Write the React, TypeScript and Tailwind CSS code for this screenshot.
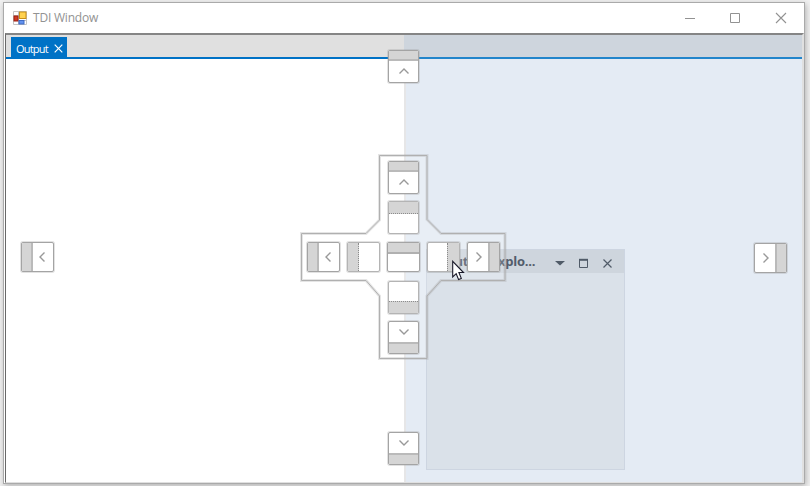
import React from 'react';

type Dir = 'up' | 'down' | 'left' | 'right';

const ARROWS: Record<Dir, string> = {
  up: 'M1.5 7.5 L6 3 L10.5 7.5',
  down: 'M1.5 3.5 L6 8 L10.5 3.5',
  left: 'M7.5 1.5 L3 6 L7.5 10.5',
  right: 'M4.5 1.5 L9 6 L4.5 10.5',
};

const FLOW: Record<Dir, string> = {
  up: 'flex-col h-[33px] w-[31px]',
  down: 'flex-col-reverse h-[33px] w-[31px]',
  left: 'flex-row h-[30px] w-[33px]',
  right: 'flex-row-reverse h-[30px] w-[33px]',
};

const STRIP: Record<Dir, string> = {
  up: 'h-[10px] border-b-2',
  down: 'h-[11px] border-t-2',
  left: 'w-[11px] border-r-2',
  right: 'w-[11px] border-l-2',
};

const DOTTED: Record<Dir, string> = {
  up: 'h-[12px] border-b',
  down: 'h-[12px] border-t',
  left: 'w-[11px] border-r',
  right: 'w-[12px] border-l',
};

function Guide({ dir, at, arrow = true, dotted = false }: { dir: Dir; at: string; arrow?: boolean; dotted?: boolean }) {
  return (
    <div
      className={`absolute flex overflow-hidden rounded-[2px] border bg-white ${dotted ? 'border-[#b4b4b4]' : 'border-[#a4a4a4]'} shadow-[0_0_0_1px_rgba(150,150,150,0.28)] ${FLOW[dir]} ${at}`}
    >
      <div className={`shrink-0 bg-[#d5d5d5] ${dotted ? `border-dotted border-[#8c8c8c] ${DOTTED[dir]}` : `border-[#bababa] ${STRIP[dir]}`}`} />
      <div className="flex flex-1 items-center justify-center">
        {arrow && (
          <svg className="shrink-0" width="12" height="12" viewBox="0 0 12 12" fill="none" stroke="#999" strokeWidth="1.4">
            <path d={ARROWS[dir]} />
          </svg>
        )}
      </div>
    </div>
  );
}

function AppIcon() {
  return (
    <svg width="15" height="15" viewBox="0 0 15 15" fill="none">
      <path d="M.5 .5h13v13H.5z" fill="#fff" stroke="#c4c4c4" />
      <path d="M5.5 0v14M0 4.5h6M0 9.5h14" stroke="#c4c4c4" />
      <rect x="1" y="5" width="4" height="5" fill="#d03a24" stroke="#9c2013" />
      <rect x="6.5" y="1" width="6.5" height="6.5" fill="#ffd24f" stroke="#c98f16" />
      <rect x="6" y="9.5" width="5" height="3.5" fill="#6292ee" stroke="#3f6ac4" />
    </svg>
  );
}

export default function App() {
  return (
    <div className="relative h-[486px] w-[810px] overflow-hidden bg-[#f1f1f1] pl-[3px] pt-[2px] font-['Open_Sans','Noto_Sans',sans-serif]">
      <div className="flex h-[482px] w-[802px] flex-col border border-[#aaaaaa] bg-white shadow-[1px_2px_6px_0px_#b0b0b0]">
        <header className="flex h-[30px] shrink-0 items-center pl-[9px]">
          <AppIcon />
          <span className="ml-[5px] text-[12px] tracking-[-0.2px] text-[#929292]">TDI Window</span>
          <svg className="ml-auto mr-[16px]" width="104" height="12" viewBox="0 0 104 12" fill="none" stroke="#929292">
            <path d="M1 6.5h10M46.5 1.5h9v9h-9z" />
            <path d="M92 1l10 10M102 1l-10 10" strokeWidth="1.1" />
          </svg>
        </header>

        <main className="ml-px flex min-h-0 flex-1 flex-col border-b border-l border-r-2 border-t-2 border-b-[#e0e0e0] border-l-[#696969] border-r-[#e0e0e0] border-t-[#858585] bg-white">
          <div className="flex h-[24px] shrink-0 items-end border-b-2 border-[#0072c6] bg-[#e0e0e0] pl-[5px]">
            <div className="flex h-[20px] w-[56px] items-center bg-[#0072c6] pl-[5px] pt-[2px] text-white">
              <span className="text-[11px] leading-none tracking-[-0.8px]">Output</span>
              <svg className="ml-auto mr-[4px]" width="9" height="9" viewBox="0 0 9 9" stroke="#fff" strokeWidth="1.2">
                <path d="M.7 .7l7.6 7.6M8.3 .7L.7 8.3" />
              </svg>
            </div>
          </div>
        </main>
      </div>

      <div className="absolute left-[404px] top-[35px] h-[447px] w-[398px] bg-[#e4ebf4]">
        <div className="h-[24px] border-b-2 border-[#2285cb] bg-[#ced5dd]" />
        <div className="h-[423px] w-[2px] bg-[#e6e6e7]" />
      </div>

      <div className="absolute left-[426px] top-[249px] h-[221px] w-[199px] border border-[#cdd5e1] bg-[#dae1e9]">
        <div className="flex h-[23px] items-center bg-[#ced5dd] pl-[9px] text-[#525c6b]">
          <span className="whitespace-nowrap text-[13px] font-bold leading-none tracking-[-0.25px]">Solution Explo...</span>
          <svg className="ml-auto mr-[12px] mt-[3px]" width="60" height="10" viewBox="0 0 60 10" fill="none" stroke="#505b68">
            <path d="M3 3h10l-5 4.5z" fill="#505b68" stroke="none" />
            <path d="M27.5 2v7.5h8V2" />
            <path d="M27 1.8h9" strokeWidth="2" />
            <path d="M51.5 1.5l8 8M59.5 1.5l-8 8" strokeWidth="1.2" />
          </svg>
        </div>
      </div>

      <svg className="absolute left-[300px] top-[154px]" width="208" height="208" viewBox="300 154 208 208" fill="none">
        <path
          d="M379.5 155.5H427V219.5L441 233.5H505V280.5H441L427 296V358.5H379.5V296L366 280.5H301.5V233.5H366L379.5 220Z"
          fill="#fff" fillOpacity="0.15" stroke="#969696" strokeOpacity="0.25" strokeWidth="3"
        />
        <path
          d="M379.5 155.5H427V219.5L441 233.5H505V280.5H441L427 296V358.5H379.5V296L366 280.5H301.5V233.5H366L379.5 220Z"
          stroke="#b0b0b0"
        />
      </svg>

      <Guide dir="up" at="left-[388px] top-[50px]" />
      <Guide dir="left" at="left-[21px] top-[242px]" />
      <Guide dir="right" at="left-[754px] top-[243px]" />
      <Guide dir="down" at="left-[388px] top-[432px]" />

      <Guide dir="up" at="left-[388px] top-[161px]" />
      <Guide dir="up" at="left-[388px] top-[201px]" arrow={false} dotted />
      <Guide dir="left" at="left-[307px] top-[242px]" />
      <Guide dir="left" at="left-[347px] top-[242px]" arrow={false} dotted />
      <Guide dir="right" at="left-[427px] top-[242px]" arrow={false} dotted />
      <Guide dir="right" at="left-[467px] top-[242px]" />
      <Guide dir="down" at="left-[388px] top-[281px]" arrow={false} dotted />
      <Guide dir="down" at="left-[388px] top-[321px]" />
      <div className="absolute left-[387px] top-[242px] h-[30px] w-[33px] overflow-hidden rounded-[2px] border border-[#a4a4a4] bg-white shadow-[0_0_0_1px_rgba(150,150,150,0.28)]">
        <div className="h-[11px] border-b-2 border-[#b0b0b0] bg-[#d5d5d5]" />
      </div>

      <svg className="absolute left-[452px] top-[260px]" width="13" height="21" viewBox="0 0 13 21">
        <path d="M.7 1.3V17L4.2 13.7L6.6 19.6L9.3 18.4L6.9 12.5H11.5Z" fill="#fff" stroke="#181828" strokeWidth="1.1" />
      </svg>
    </div>
  );
}
